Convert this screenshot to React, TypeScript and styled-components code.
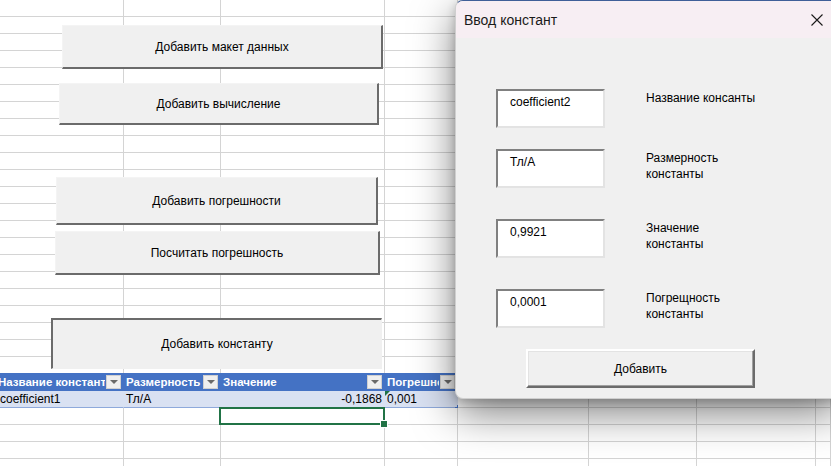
import React from 'react';
import styled, { createGlobalStyle, css } from 'styled-components';

const GlobalStyle = createGlobalStyle`
  html, body {
    margin: 0;
    padding: 0;
    background: #ffffff;
    overflow: hidden;
  }
  * { box-sizing: border-box; }
`;

const Page = styled.div`
  position: relative;
  width: 831px;
  height: 466px;
  overflow: hidden;
  background: #ffffff;
  font-family: "Liberation Sans", Arial, sans-serif;
`;

// ---------- sheet grid ----------
const Sheet = styled.div`
  display: grid;
  grid-template-columns: 124px 97px 164px 73px 131px 108px 119px 1fr;
  grid-auto-rows: 17px;
  width: 100%;
`;

type CellKind = 'plain' | 'head' | 'data';

const Cell = styled.div<{ $kind?: CellKind; $right?: boolean; $selected?: boolean }>`
  position: relative;
  border-right: 1px solid #d4d4d4;
  border-bottom: 1px solid #d4d4d4;
  font-size: 12px;
  line-height: 16px;
  color: #000;
  padding: 0 2px;
  white-space: nowrap;
  overflow: visible;
  text-align: ${(p) => (p.$right ? 'right' : 'left')};

  ${(p) =>
    p.$kind === 'head' &&
    css`
      background: #4472c4;
      border-right-color: #4472c4;
      border-bottom-color: #4472c4;
      box-shadow: 0 -1px 0 #4472c4;
      color: #ffffff;
      font-weight: 700;
      font-size: 11.5px;
      overflow: hidden;
      padding-right: 18px;
    `}

  ${(p) =>
    p.$kind === 'data' &&
    css`
      background: #d9e1f2;
      border-right-color: #d9e1f2;
      border-bottom-color: #8ea9db;
    `}

  ${(p) =>
    p.$selected &&
    css`
      &::after {
        content: '';
        position: absolute;
        left: -2px;
        top: -1px;
        right: -1px;
        bottom: -1px;
        border: 2px solid #217346;
      }
      &::before {
        content: '';
        position: absolute;
        right: -4px;
        bottom: -4px;
        width: 6px;
        height: 6px;
        background: #217346;
        border: 1px solid #fff;
        z-index: 1;
      }
    `}
`;

const HeadText = styled.span<{ $shift?: number }>`
  display: block;
  margin-left: ${(p) => p.$shift ?? 0}px;
  overflow: hidden;
  text-overflow: clip;
`;

const Dropdown = styled.span`
  position: absolute;
  right: 2px;
  top: 1px;
  width: 15px;
  height: 14px;
  background: #efefef;
  border: 1px solid #d0d0d0;
  display: flex;
  align-items: center;
  justify-content: center;
  &::after {
    content: '';
    border-left: 4px solid transparent;
    border-right: 4px solid transparent;
    border-top: 4px solid #6a6a6a;
  }
`;

const ErrorMark = styled.span`
  position: absolute;
  left: 0;
  top: 0;
  width: 0;
  height: 0;
  border-top: 5px solid #217346;
  border-right: 5px solid transparent;
`;

const ResizeMark = styled.span`
  position: absolute;
  right: -1px;
  bottom: -1px;
  width: 3px;
  height: 3px;
  border-right: 1px solid #4472c4;
  border-bottom: 1px solid #4472c4;
`;

// ---------- sheet form buttons ----------
const SheetButton = styled.div<{ $x: number; $y: number; $w: number; $h: number; $pressed?: boolean }>`
  position: absolute;
  left: ${(p) => p.$x}px;
  top: ${(p) => p.$y}px;
  width: ${(p) => p.$w}px;
  height: ${(p) => p.$h}px;
  background: #f0f0f0;
  display: flex;
  align-items: center;
  justify-content: center;
  font-size: 12px;
  color: #000;
  border-top: 1px solid #f4f4f4;
  border-left: 1px solid #f4f4f4;
  border-right: 2px solid #6b6b6b;
  border-bottom: 2px solid #6b6b6b;
  ${(p) =>
    p.$pressed &&
    css`
      border-top: 2px solid #6b6b6b;
      border-left: 2px solid #6b6b6b;
      border-right: 1px solid #f0f0f0;
      border-bottom: 1px solid #f0f0f0;
    `}
`;

// ---------- dialog ----------
const Dialog = styled.div`
  position: absolute;
  left: 455px;
  top: 0;
  width: 386px;
  height: 399px;
  background: #f0f0f0;
  border-radius: 8px;
  border: 1px solid #cfcfcf;
  border-top: 1px solid #3f5f98;
  box-shadow: 0 14px 42px rgba(0, 0, 0, 0.5), 0 3px 10px rgba(0, 0, 0, 0.2);
  overflow: hidden;
  display: flex;
  flex-direction: column;
`;

const TitleBar = styled.div`
  height: 37px;
  flex: none;
  background: #f7eef3;
  display: flex;
  align-items: center;
  justify-content: space-between;
  padding-left: 8px;
`;

const Title = styled.span`
  font-family: "Liberation Sans", Arial, sans-serif;
  font-size: 14px;
  color: #1a1a1a;
  margin-top: 1px;
`;

const CloseButton = styled.div`
  width: 46px;
  height: 37px;
  display: flex;
  align-items: center;
  justify-content: center;
`;

const DialogBody = styled.div`
  padding: 51px 0 0 40px;
  display: flex;
  flex-direction: column;
`;

const FieldRow = styled.div<{ $gap: number }>`
  display: flex;
  align-items: flex-start;
  margin-top: ${(p) => p.$gap}px;
`;

const TextBox = styled.div`
  width: 109px;
  height: 39px;
  background: #ffffff;
  border-top: 2px solid #808080;
  border-left: 2px solid #808080;
  border-right: 2px solid #e3e3e3;
  border-bottom: 2px solid #e3e3e3;
  padding: 4px 0 0 12px;
  font-size: 12px;
  line-height: 14px;
  color: #000;
`;

const FieldLabel = styled.div`
  margin-left: 41px;
  margin-top: 1px;
  font-size: 12px;
  line-height: 16px;
  color: #000;
  width: 110px;
`;

const AddButton = styled.div`
  margin: 21px 0 0 30px;
  width: 229px;
  height: 39px;
  background: #f0f0f0;
  border-top: 2px solid #ffffff;
  border-left: 2px solid #ffffff;
  border-right: 2px solid #6b6b6b;
  border-bottom: 2px solid #6b6b6b;
  box-shadow: inset -1px -1px 0 #a0a0a0, inset 1px 1px 0 #e3e3e3;
  display: flex;
  align-items: center;
  justify-content: center;
  font-size: 12px;
  color: #000;
`;

const fields = [
  { value: 'coefficient2', label: 'Название консанты', gap: 0 },
  { value: 'Тл/А', label: 'Размерность константы', gap: 21 },
  { value: '0,9921', label: 'Значение константы', gap: 31 },
  { value: '0,0001', label: 'Погрещность константы', gap: 31 },
];

const sheetButtons = [
  { text: 'Добавить макет данных', x: 62, y: 25, w: 321, h: 44 },
  { text: 'Добавить вычисление', x: 59, y: 83, w: 320, h: 42 },
  { text: 'Добавить погрешности', x: 56, y: 177, w: 322, h: 48 },
  { text: 'Посчитать погрешность', x: 55, y: 231, w: 325, h: 44 },
  { text: 'Добавить константу', x: 51, y: 318, w: 331, h: 51, pressed: true },
];

const ROWS = 28;
const COLS = 8;
const HEAD_ROW = 22;
const DATA_ROW = 23;
const SEL_ROW = 24;

const headers = ['Название константы', 'Размерность', 'Значение', 'Погрешность'];
const dataRow = ['coefficient1', 'Тл/А', '-0,1868', '0,001'];

function renderCell(r: number, c: number) {
  const key = `${r}-${c}`;
  if (r === HEAD_ROW && c < 4) {
    return (
      <Cell key={key} $kind="head">
        <HeadText $shift={c === 0 ? -4 : 0}>{headers[c]}</HeadText>
        <Dropdown />
      </Cell>
    );
  }
  if (r === DATA_ROW && c < 4) {
    return (
      <Cell key={key} $kind="data" $right={c === 2}>
        {c === 3 && <ErrorMark />}
        {c === 3 && <ResizeMark />}
        {c === 0 ? <HeadText $shift={-2}>{dataRow[c]}</HeadText> : dataRow[c]}
      </Cell>
    );
  }
  return <Cell key={key} $selected={r === SEL_ROW && c === 2} />;
}

export default function App() {
  const cells: React.ReactNode[] = [];
  for (let r = 0; r < ROWS; r++) {
    for (let c = 0; c < COLS; c++) {
      cells.push(renderCell(r, c));
    }
  }

  return (
    <>
      <GlobalStyle />
      <Page>
        <Sheet>{cells}</Sheet>

        {sheetButtons.map((b) => (
          <SheetButton key={b.text} $x={b.x} $y={b.y} $w={b.w} $h={b.h} $pressed={b.pressed}>
            {b.text}
          </SheetButton>
        ))}

        <Dialog>
          <TitleBar>
            <Title>Ввод констант</Title>
            <CloseButton>
              <svg width="12" height="12" viewBox="0 0 12 12">
                <path d="M0.5 0.5 L11.5 11.5 M11.5 0.5 L0.5 11.5" stroke="#1a1a1a" strokeWidth="1.1" fill="none" />
              </svg>
            </CloseButton>
          </TitleBar>
          <DialogBody>
            {fields.map((f) => (
              <FieldRow key={f.value} $gap={f.gap}>
                <TextBox>{f.value}</TextBox>
                <FieldLabel>{f.label}</FieldLabel>
              </FieldRow>
            ))}
            <AddButton>Добавить</AddButton>
          </DialogBody>
        </Dialog>
      </Page>
    </>
  );
}
